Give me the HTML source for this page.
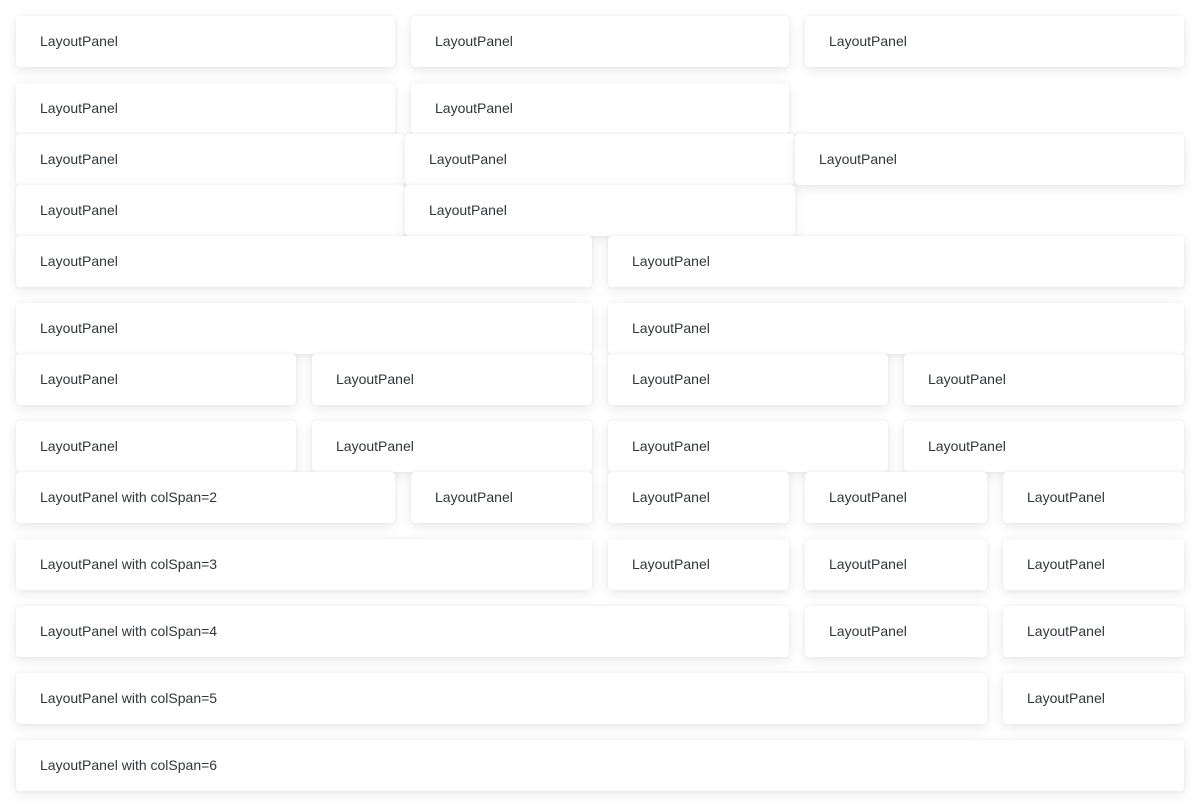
<!DOCTYPE html>
<html><head><meta charset="utf-8"><style>
html,body{margin:0;padding:0;background:#fff;width:1200px;height:807px;overflow:hidden;position:relative}
.p{position:absolute;height:51px;background:#fff;border-radius:4px;box-shadow:0 0 4px rgba(0,0,0,0.06),0 4px 12px rgba(0,0,0,0.08);font:14px "Liberation Sans",sans-serif;color:#32363a;line-height:51px;padding-left:24px;box-sizing:border-box;white-space:nowrap}
</style></head><body>
<div id="c"></div>
<script>
var rows=[
[16,[[16,395],[411,789],[805,1184]]],
[83,[[16,395],[411,789]]],
[134,[[16,405],[405,795],[795,1184]]],
[185,[[16,405],[405,795]]],
[236,[[16,592],[608,1184]]],
[303,[[16,592],[608,1184]]],
[354,[[16,296],[312,592],[608,888],[904,1184]]],
[421,[[16,296],[312,592],[608,888],[904,1184]]],
[472,[[16,395,2],[411,592],[608,789],[805,987],[1003,1184]]],
[539,[[16,592,3],[608,789],[805,987],[1003,1184]]],
[606,[[16,789,4],[805,987],[1003,1184]]],
[673,[[16,987,5],[1003,1184]]],
[740,[[16,1184,6]]]
];
var h='';
rows.forEach(function(r){r[1].forEach(function(c){
h+='<div class="p" style="top:'+r[0]+'px;left:'+c[0]+'px;width:'+(c[1]-c[0])+'px">LayoutPanel'+(c[2]?' with colSpan='+c[2]:'')+'</div>';
});});
document.getElementById('c').innerHTML=h;
</script>
</body></html>
